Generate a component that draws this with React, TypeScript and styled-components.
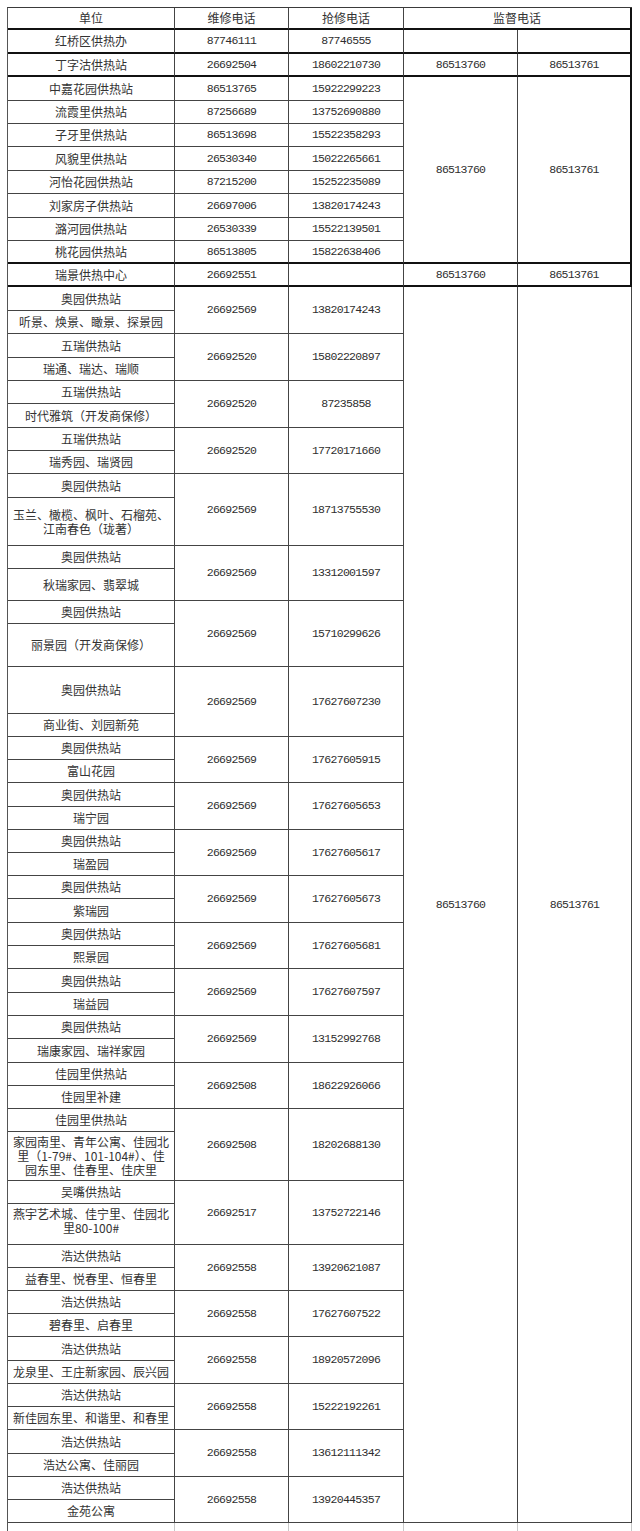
import React from "react";
import styled, { createGlobalStyle } from "styled-components";

const GlobalStyle = createGlobalStyle`
  body {
    margin: 0;
    background: #fff;
  }
`;

const Page = styled.div`
  height: 1531px;
  overflow: hidden;
  padding: 7px 0 0 7px;
  box-sizing: border-box;
  background: #fff;
`;

const Sheet = styled.div<{ $rows: string }>`
  display: grid;
  grid-template-columns: 167px 114px 115px 114px 114px;
  grid-template-rows: ${(p) => p.$rows};
  width: max-content;
  border-top: 1px solid #3a3a3a;
  border-left: 1px solid #555;
`;

const Cell = styled.div<{
  $span?: number;
  $wide?: boolean;
  $heavy?: boolean;
  $edge?: boolean;
  $lift?: boolean;
}>`
  grid-row: span ${(p) => p.$span ?? 1};
  grid-column: span ${(p) => (p.$wide ? 2 : 1)};
  display: flex;
  align-items: center;
  justify-content: center;
  box-sizing: border-box;
  padding: 0 3px ${(p) => (p.$lift ? "6px" : "0")};
  border-right: ${(p) => (p.$edge ? "2px solid #111" : "1px solid #444")};
  border-bottom: ${(p) => (p.$heavy ? "2px solid #111" : "1px solid #444")};
  font-family: "Noto Sans CJK SC", "Liberation Sans", sans-serif;
  font-size: 12px;
  line-height: 14px;
  color: #333;
  text-align: center;
  white-space: nowrap;
  overflow: hidden;
`;

const Phone = styled(Cell)`
  font-family: "Liberation Mono", "DejaVu Sans Mono", monospace;
  font-size: 11.5px;
  letter-spacing: -0.7px;
  color: #2e2e2e;
`;

const Tail = styled.div`
  border-right: 1px solid #c8c8c8;
`;

type Line = { name: string; repair: string; rescue: string };

type Block = {
  station: string;
  area: React.ReactNode;
  repair: string;
  rescue: string;
  h: [number, number];
  lift?: boolean;
};

const hongqiao: Line = { name: "红桥区供热办", repair: "87746111", rescue: "87746555" };
const dingzigu: Line = { name: "丁字沽供热站", repair: "26692504", rescue: "18602210730" };

const group: Line[] = [
  { name: "中嘉花园供热站", repair: "86513765", rescue: "15922299223" },
  { name: "流霞里供热站", repair: "87256689", rescue: "13752690880" },
  { name: "子牙里供热站", repair: "86513698", rescue: "15522358293" },
  { name: "风貌里供热站", repair: "26530340", rescue: "15022265661" },
  { name: "河怡花园供热站", repair: "87215200", rescue: "15252235089" },
  { name: "刘家房子供热站", repair: "26697006", rescue: "13820174243" },
  { name: "潞河园供热站", repair: "26530339", rescue: "15522139501" },
  { name: "桃花园供热站", repair: "86513805", rescue: "15822638406" },
];
const groupHeights = [24, 23, 23, 24, 23, 24, 23, 23];

const blocks: Block[] = [
  { station: "奥园供热站", area: "听景、焕景、瞰景、探景园", repair: "26692569", rescue: "13820174243", h: [24, 23] },
  { station: "五瑞供热站", area: "瑞通、瑞达、瑞顺", repair: "26692520", rescue: "15802220897", h: [24, 23] },
  { station: "五瑞供热站", area: "时代雅筑（开发商保修）", repair: "26692520", rescue: "87235858", h: [23, 24] },
  { station: "五瑞供热站", area: "瑞秀园、瑞贤园", repair: "26692520", rescue: "17720171660", h: [23, 23] },
  {
    station: "奥园供热站",
    area: (
      <>
        玉兰、橄榄、枫叶、石榴苑、
        <br />
        江南春色（珑著）
      </>
    ),
    repair: "26692569",
    rescue: "18713755530",
    h: [24, 48],
  },
  { station: "奥园供热站", area: "秋瑞家园、翡翠城", repair: "26692569", rescue: "13312001597", h: [23, 32] },
  { station: "奥园供热站", area: "丽景园（开发商保修）", repair: "26692569", rescue: "15710299626", h: [23, 43] },
  { station: "奥园供热站", area: "商业街、刘园新苑", repair: "26692569", rescue: "17627607230", h: [47, 23] },
  { station: "奥园供热站", area: "富山花园", repair: "26692569", rescue: "17627605915", h: [23, 23] },
  { station: "奥园供热站", area: "瑞宁园", repair: "26692569", rescue: "17627605653", h: [24, 23] },
  { station: "奥园供热站", area: "瑞盈园", repair: "26692569", rescue: "17627605617", h: [23, 23] },
  { station: "奥园供热站", area: "紫瑞园", repair: "26692569", rescue: "17627605673", h: [23, 24] },
  { station: "奥园供热站", area: "熙景园", repair: "26692569", rescue: "17627605681", h: [23, 23] },
  { station: "奥园供热站", area: "瑞益园", repair: "26692569", rescue: "17627607597", h: [24, 23] },
  { station: "奥园供热站", area: "瑞康家园、瑞祥家园", repair: "26692569", rescue: "13152992768", h: [23, 24] },
  { station: "佳园里供热站", area: "佳园里补建", repair: "26692508", rescue: "18622926066", h: [23, 23] },
  {
    station: "佳园里供热站",
    area: (
      <>
        家园南里、青年公寓、佳园北
        <br />
        里（1-79#、101-104#）、佳
        <br />
        园东里、佳春里、佳庆里
      </>
    ),
    repair: "26692508",
    rescue: "18202688130",
    h: [23, 49],
  },
  {
    station: "吴嘴供热站",
    area: (
      <>
        燕宇艺术城、佳宁里、佳园北
        <br />
        里80-100#
      </>
    ),
    repair: "26692517",
    rescue: "13752722146",
    h: [23, 41],
    lift: true,
  },
  { station: "浩达供热站", area: "益春里、悦春里、恒春里", repair: "26692558", rescue: "13920621087", h: [23, 23] },
  { station: "浩达供热站", area: "碧春里、启春里", repair: "26692558", rescue: "17627607522", h: [23, 23] },
  { station: "浩达供热站", area: "龙泉里、王庄新家园、辰兴园", repair: "26692558", rescue: "18920572096", h: [24, 23] },
  { station: "浩达供热站", area: "新佳园东里、和谐里、和春里", repair: "26692558", rescue: "15222192261", h: [23, 23] },
  { station: "浩达供热站", area: "浩达公寓、佳丽园", repair: "26692558", rescue: "13612111342", h: [24, 23] },
  { station: "浩达供热站", area: "金苑公寓", repair: "26692558", rescue: "13920445357", h: [23, 23] },
];

const SUPERVISE_A = "86513760";
const SUPERVISE_B = "86513761";

const rowHeights = [
  22, 24, 23,
  ...groupHeights,
  23,
  ...blocks.flatMap((b) => b.h),
  30,
];

const App: React.FC = () => {
  return (
    <Page>
      <GlobalStyle />
      <Sheet $rows={rowHeights.map((h) => `${h}px`).join(" ")}>
        <Cell $heavy>单位</Cell>
        <Cell $heavy>维修电话</Cell>
        <Cell $heavy>抢修电话</Cell>
        <Cell $heavy $wide $edge>监督电话</Cell>

        <Cell $heavy>{hongqiao.name}</Cell>
        <Phone $heavy>{hongqiao.repair}</Phone>
        <Phone $heavy>{hongqiao.rescue}</Phone>
        <Phone $heavy />
        <Phone $heavy $edge />

        <Cell $heavy>{dingzigu.name}</Cell>
        <Phone $heavy>{dingzigu.repair}</Phone>
        <Phone $heavy>{dingzigu.rescue}</Phone>
        <Phone $heavy>{SUPERVISE_A}</Phone>
        <Phone $heavy $edge>{SUPERVISE_B}</Phone>

        {group.map((row, i) => {
          const last = i === group.length - 1;
          return (
            <React.Fragment key={row.name}>
              <Cell $heavy={last}>{row.name}</Cell>
              <Phone $heavy={last}>{row.repair}</Phone>
              <Phone $heavy={last}>{row.rescue}</Phone>
              {i === 0 && (
                <>
                  <Phone $heavy $span={group.length}>{SUPERVISE_A}</Phone>
                  <Phone $heavy $edge $span={group.length}>{SUPERVISE_B}</Phone>
                </>
              )}
            </React.Fragment>
          );
        })}

        <Cell $heavy>瑞景供热中心</Cell>
        <Phone $heavy>26692551</Phone>
        <Phone $heavy />
        <Phone $heavy>{SUPERVISE_A}</Phone>
        <Phone $heavy $edge>{SUPERVISE_B}</Phone>

        {blocks.map((b, i) => (
          <React.Fragment key={i}>
            <Cell>{b.station}</Cell>
            <Phone $span={2}>{b.repair}</Phone>
            <Phone $span={2}>{b.rescue}</Phone>
            {i === 0 && (
              <>
                <Phone $span={blocks.length * 2}>{SUPERVISE_A}</Phone>
                <Phone $span={blocks.length * 2}>{SUPERVISE_B}</Phone>
              </>
            )}
            <Cell $lift={b.lift}>{b.area}</Cell>
          </React.Fragment>
        ))}

        <Tail />
        <Tail />
        <Tail />
        <Tail />
        <Tail />
      </Sheet>
    </Page>
  );
};

export default App;
